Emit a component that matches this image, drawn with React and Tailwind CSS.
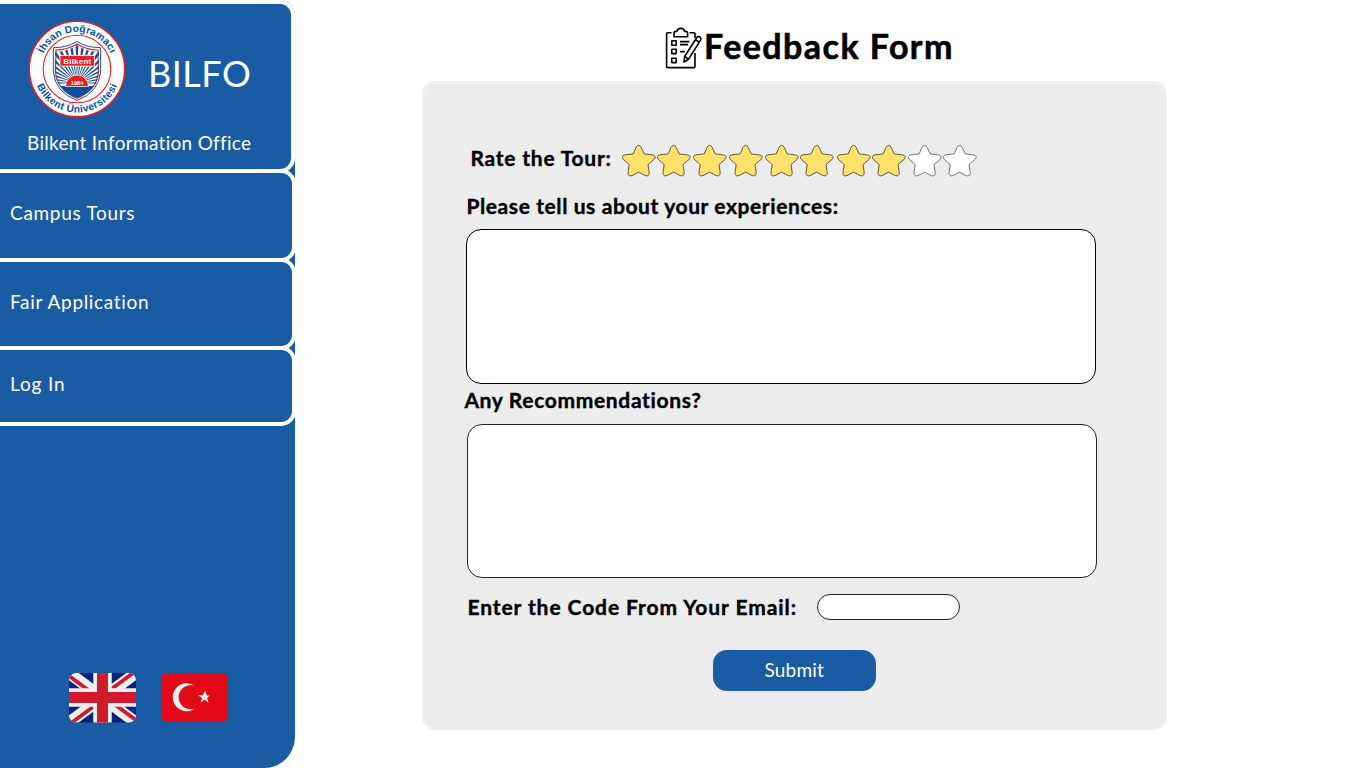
const STAR_CELLS = [
  ["w-[35px]", true],
  ["w-[36.5px]", true],
  ["w-[35.5px]", true],
  ["w-[36.5px]", true],
  ["w-[35px]", true],
  ["w-[36.5px]", true],
  ["w-[35.5px]", true],
  ["w-[36px]", true],
  ["w-[35px]", false],
  ["w-[34px]", false],
];

const NAV_ITEMS = [
  { label: "Campus Tours", box: "h-[93px] pb-1.5", text: "tracking-[0.7px]" },
  { label: "Fair Application", box: "-mt-1 h-[92px] pb-1", text: "tracking-[0.68px]" },
  { label: "Log In", box: "-mt-1 h-[80px] pb-1", text: "tracking-[0.85px]" },
];

const RAYS = Array.from({ length: 21 }, (_, i) => {
  const a = Math.PI + (Math.PI * i) / 20;
  const d = 0.036;
  const p = (t) => `${49 + 50 * Math.cos(t)},${63 + 50 * Math.sin(t)}`;
  return `49,63 ${p(a - d)} ${p(a + d)}`;
});

function Star({ filled }) {
  return (
    <svg width="34" height="34" viewBox="0 0 34 34" className="shrink-0">
      <path
        d="M14 3.4 Q16.6 -0.8 19.2 3.4 L22.2 9.9 L30.6 10.9 Q35 12 32 15.4 L26 20.6 L27.2 28.6 Q27.2 33 23.2 31.6 L16.6 28.2 L10 31.6 Q6 33 6 28.6 L7.2 20.6 L1.4 15.4 Q-1.4 12 2.8 10.9 L11.2 9.9 Z"
        fill={filled ? "#ffe16b" : "#ffffff"}
        stroke={filled ? "#3a3520" : "#555555"}
        strokeWidth="0.8"
        strokeLinejoin="round"
      />
    </svg>
  );
}

function Crest() {
  return (
    <svg width="98" height="98" viewBox="0 0 98 98" className="shrink-0">
      <defs>
        <path id="arcTop" d="M12 49 A37 37 0 0 1 86 49" />
        <path id="arcBottom" d="M5.5 49 A43.5 43.5 0 0 0 92.5 49" />
        <clipPath id="shield">
          <path d="M27 32 Q39 32 49 25 Q59 32 71 32 L71 52 Q70 70 49 78 Q28 70 27 52 Z" />
        </clipPath>
      </defs>
      <circle cx="49" cy="49" r="47.7" fill="#fff" stroke="#ed1c24" strokeWidth="1.5" />
      <circle cx="49" cy="49" r="33.8" fill="none" stroke="#ed1c24" strokeWidth="1.1" />
      <g fill="#0b4ea2" fontFamily="Liberation Sans, sans-serif" fontWeight="700" fontSize="10.2">
        <text textAnchor="middle">
          <textPath href="#arcTop" startOffset="50%" textLength="84">İhsan Doğramacı</textPath>
        </text>
        <text textAnchor="middle">
          <textPath href="#arcBottom" startOffset="50%" textLength="102">Bilkent Üniversitesi</textPath>
        </text>
      </g>
      <path d="M25.8 27.5 Q38 28 49 21.5 Q60 28 72.2 27.5 Q73 32 72.6 38 L72.6 52 Q71 72 49 80.5 Q27 72 25.4 52 L25.4 38 Q25 32 25.8 27.5 Z" fill="#fff" stroke="#174f96" strokeWidth="1" />
      <path d="M28 30 Q39 30 49 24 Q59 30 70 30 L70.5 52 Q69 70 49 78.3 Q29 70 27.5 52 Z" fill="#fff" stroke="#ed1c24" strokeWidth="1.2" />
      <g clipPath="url(#shield)">
        {RAYS.map((points) => (
          <polygon key={points} points={points} fill="#174f96" />
        ))}
        <rect x="25" y="66" width="48" height="16" fill="#0b4ea2" />
        <path d="M37.5 66.5 A11.5 11.5 0 0 1 60.5 66.5 Z" fill="#ed1c24" stroke="#fff" strokeWidth="0.7" />
      </g>
      <rect x="32" y="35.3" width="34.4" height="10.8" fill="#ed1c24" stroke="#fff" strokeWidth="0.8" />
      <g fill="#fff" fontFamily="Liberation Sans, sans-serif" fontWeight="700" textAnchor="middle">
        <text x="49.2" y="43.6" fontSize="8" textLength="28">Bilkent</text>
        <text x="49" y="65" fontSize="5.6" textLength="12.5">1984</text>
      </g>
    </svg>
  );
}

function ClipboardIcon() {
  return (
    <svg width="38" height="42" viewBox="0 0 38 42" fill="none" stroke="#000" strokeWidth="1.6" strokeLinejoin="round" className="mt-px shrink-0">
      <path d="M6.5 5.8 H2.6 Q1.6 5.8 1.6 6.8 V39.6 Q1.6 40.6 2.6 40.6 H29 Q30 40.6 30 39.6 V26" />
      <path d="M24.5 5.8 H29 Q30 5.8 30 6.8 V11" />
      <path d="M9 9.8 V6.2 Q9 4.4 10.8 4.4 H12 Q12.6 1.4 15.8 1.4 Q19 1.4 19.6 4.4 H20.8 Q22.6 4.4 22.6 6.2 V9.8 Z" />
      <rect x="6.8" y="13.8" width="4.4" height="4.4" />
      <rect x="6.8" y="22.2" width="4.4" height="4.4" />
      <rect x="6.8" y="31.2" width="4.4" height="4.4" />
      <path d="M15 14.6 H24.4 M15 17.6 H23 M15 24.6 H19.8" />
      <path d="M32 10.2 Q33.4 8.9 35 10 Q36.5 11.2 35.7 12.8 L23.6 32.2 L19 35 L19.6 29.5 Z M30.4 12.6 L34.2 15.2 M19.6 29.5 L23.6 32.2" />
    </svg>
  );
}

function UkFlag() {
  return (
    <svg width="67" height="50" viewBox="0 0 67 50">
      <defs>
        <clipPath id="ukRound">
          <rect width="67" height="49.5" rx="7" />
        </clipPath>
      </defs>
      <g clipPath="url(#ukRound)">
        <rect width="67" height="50" fill="#00247d" />
        <path d="M0 0 L67 49.5 M67 0 L0 49.5" stroke="#eee" strokeWidth="11.5" />
        <path d="M-2 1.5 L33.5 27.5 M69 -3.5 L33.5 22.5 M69 48.5 L33.5 22.5 M-2 53 L33.5 27" stroke="#cf1b2b" strokeWidth="3.8" />
        <path d="M33.5 0 V50 M0 24.6 H67" stroke="#eee" strokeWidth="18.5" />
        <path d="M33.5 0 V50 M0 24.6 H67" stroke="#cf1b2b" strokeWidth="11" />
      </g>
    </svg>
  );
}

function TurkishFlag() {
  return (
    <svg width="67" height="50" viewBox="0 0 67 50">
      <rect width="67" height="48.7" rx="6" fill="#e30a17" />
      <path d="M35.6 13.3 A14 14 0 1 0 35.6 35.9 A12.1 12.1 0 1 1 35.6 13.3 Z" transform="translate(-1.6 -.4)" fill="#eee" />
      <path d="M44.6 18.2 L46.2 22.8 L49 22.9 L46.5 25.5 L48 30.2 L43.9 27.2 L40 30 L41.4 25.3 L37.4 22.6 L42.2 22.6 Z" transform="translate(-.4 -.4)" fill="#eee" />
    </svg>
  );
}

function Sidebar() {
  return (
    <aside className="flex h-[767.5px] w-[295px] shrink-0 flex-col rounded-tr-[14px] rounded-br-[31px] bg-[#1a5ca3] text-[19px] leading-6 text-white">
      <div className="bg-linear-to-b from-white from-50% to-transparent to-50%">
        <header className="h-[172.5px] w-[295px] rounded-r-[15px] border-4 border-l-0 border-white bg-[#1a5ca3] shadow-[0_0_1px_#1a5ca380]">
          <div className="flex items-center pt-[15.5px] pl-[28px]">
            <Crest />
            <h1 className="pt-[9px] pl-[22px] text-[36px] leading-[44px] tracking-[0.5px]">BILFO</h1>
          </div>
          <p className="pt-[13.5px] pl-[27px] tracking-[0.3px] whitespace-nowrap">Bilkent Information Office</p>
        </header>
      </div>
      <nav className="-mt-[3.5px] flex w-[296px] flex-col">
        {NAV_ITEMS.map((item) => (
          <a key={item.label} className={`flex items-center rounded-r-[15px] border-4 border-l-0 border-white pl-[10px] ${item.box}`}>
            <span className={item.text}>{item.label}</span>
          </a>
        ))}
      </nav>
      <div className="mt-auto mb-[45px] flex gap-[25.5px] pl-[68.5px]">
        <UkFlag />
        <TurkishFlag />
      </div>
    </aside>
  );
}

export default function App() {
  return (
    <div className="flex h-[768px] w-[1366px] overflow-hidden bg-white font-['Lato',sans-serif] text-black">
      <Sidebar />
      <main className="flex flex-col pl-[127.4px]">
        <div className="flex h-[81px] items-center pt-[14px] pl-[242.6px]">
          <ClipboardIcon />
          <h2 className="-mt-[4px] pl-px text-[34px] leading-[42px] font-bold tracking-[1.45px] [-webkit-text-stroke:0.6px_black]">Feedback Form</h2>
        </div>
        <form className="flex h-[649px] w-[744.6px] flex-col rounded-[13px] border-[3px] border-[#efefef] bg-[#ececec] pt-[60px] pl-[41px] text-[21px] leading-[26px] font-bold">
          <div className="flex h-[34px] items-center pl-[3px]">
            <span className="-mt-[7px] w-[152.6px] pl-px tracking-[0.78px] [-webkit-text-stroke:0.4px_black]">Rate the Tour:</span>
            {STAR_CELLS.map(([width, filled], i) => (
              <span key={i} className={`flex shrink-0 ${width}`}>
                <Star filled={filled} />
              </span>
            ))}
          </div>
          <label className="mt-[15px] tracking-[0.6px] [-webkit-text-stroke:0.4px_black]">Please tell us about your experiences:</label>
          <textarea className="-ml-[0.2px] mt-[10px] h-[155px] w-[630px] resize-none rounded-[15px] border border-black bg-white" />
          <label className="mt-[3px] -ml-[2px] tracking-[0.66px] [-webkit-text-stroke:0.4px_black]">Any Recommendations?</label>
          <textarea className="mt-[10.6px] ml-[0.2px] h-[154px] w-[630px] resize-none rounded-[15px] border border-[#222] bg-white" />
          <div className="mt-[16.4px] flex items-center">
            <label className="-mt-px w-[350.6px] pl-px tracking-[0.92px] [-webkit-text-stroke:0.4px_black]">Enter the Code From Your Email:</label>
            <input className="h-[26.5px] w-[143px] rounded-[13px] border border-[#222] bg-white" />
          </div>
          <button type="button" className="mt-[29.5px] ml-[246.6px] h-[41px] w-[162.6px] rounded-[14px] bg-[#1a5ca3] text-[19px] font-normal tracking-[0.2px] text-white">
            Submit
          </button>
        </form>
      </main>
    </div>
  );
}
